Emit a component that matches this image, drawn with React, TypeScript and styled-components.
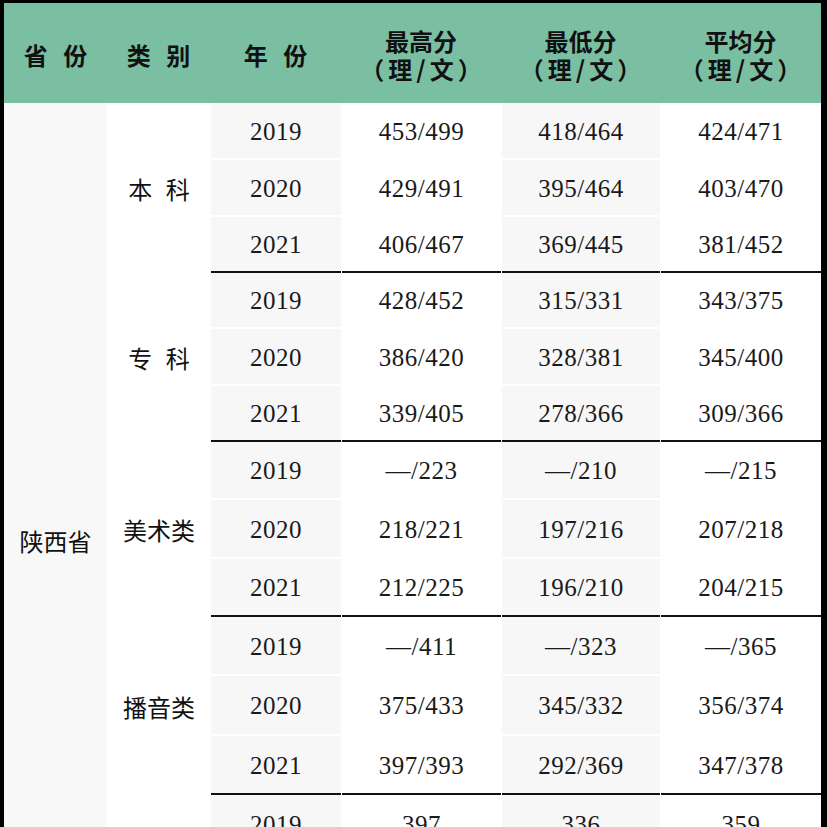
import React from 'react';
import styled, { createGlobalStyle } from 'styled-components';

const GlobalStyle = createGlobalStyle`
  html, body {
    margin: 0;
    padding: 0;
    background: #fff;
  }
`;

const Frame = styled.div`
  width: 827px;
  box-sizing: border-box;
  border-left: 4px solid #000;
  border-top: 3px solid #000;
  border-right: 6px solid #000;
  background: #fff;
`;

const HeaderRow = styled.div`
  display: grid;
  grid-template-columns: 103px 103px 131px 160px 159px 161px;
  height: 100px;
  background: #7bbfa3;
  font-family: "Noto Sans CJK SC", sans-serif;
  font-weight: 700;
  font-size: 24px;
  color: #111;
`;

const HeadCell = styled.div`
  display: flex;
  flex-direction: column;
  align-items: center;
  justify-content: center;
  padding-top: 4px;
  line-height: 28px;
  text-align: center;
  word-spacing: 10px;
  white-space: pre;
`;

const HeadSub = styled.span`
  letter-spacing: 4px;
  margin-right: -4px;
`;

const Body = styled.div`
  display: grid;
  grid-template-columns: 103px 102px 130px 159px 158px 160px;
  column-gap: 1px;
  background: #fff;
`;

const Province = styled.div<{ $span: number }>`
  grid-column: 1;
  grid-row: 1 / span ${(p) => p.$span};
  background: #f8f8f8;
  display: flex;
  align-items: center;
  justify-content: center;
  font-family: "Noto Sans CJK SC", sans-serif;
  font-size: 24px;
  color: #111;
`;

const Category = styled.div<{ $start: number }>`
  grid-column: 2;
  grid-row: ${(p) => p.$start} / span 3;
  display: flex;
  align-items: center;
  justify-content: center;
  font-family: "Noto Sans CJK SC", sans-serif;
  font-size: 24px;
  color: #111;
  word-spacing: 8px;
  white-space: pre;
`;

const Cell = styled.div<{ $gray: boolean; $last: boolean; $h: number }>`
  box-sizing: border-box;
  height: ${(p) => p.$h}px;
  display: flex;
  align-items: center;
  justify-content: center;
  padding-top: 2px;
  background: ${(p) => (p.$gray ? '#f7f7f7' : '#fff')};
  border-bottom: 2px solid ${(p) => (p.$last ? '#111' : '#fff')};
  font-family: "Liberation Serif", "Noto Sans CJK SC", serif;
  font-size: 25px;
  letter-spacing: 0.5px;
  color: #1a1a1a;
`;

type Group = { cat: string; heights: number[]; rows: string[][] };

const groups: Group[] = [
  {
    cat: '本 科',
    heights: [57, 57, 56],
    rows: [
      ['2019', '453/499', '418/464', '424/471'],
      ['2020', '429/491', '395/464', '403/470'],
      ['2021', '406/467', '369/445', '381/452'],
    ],
  },
  {
    cat: '专 科',
    heights: [56, 57, 56],
    rows: [
      ['2019', '428/452', '315/331', '343/375'],
      ['2020', '386/420', '328/381', '345/400'],
      ['2021', '339/405', '278/366', '309/366'],
    ],
  },
  {
    cat: '美术类',
    heights: [58, 59, 58],
    rows: [
      ['2019', '—/223', '—/210', '—/215'],
      ['2020', '218/221', '197/216', '207/218'],
      ['2021', '212/225', '196/210', '204/215'],
    ],
  },
  {
    cat: '播音类',
    heights: [59, 60, 59],
    rows: [
      ['2019', '—/411', '—/323', '—/365'],
      ['2020', '375/433', '345/332', '356/374'],
      ['2021', '397/393', '292/369', '347/378'],
    ],
  },
  {
    cat: '编导类',
    heights: [60, 61, 61],
    rows: [
      ['2019', '397', '336', '359'],
      ['2020', '402', '351', '368'],
      ['2021', '410', '362', '377'],
    ],
  },
];

const headers: { title: string; sub?: string }[] = [
  { title: '省 份' },
  { title: '类 别' },
  { title: '年 份' },
  { title: '最高分', sub: '（理/文）' },
  { title: '最低分', sub: '（理/文）' },
  { title: '平均分', sub: '（理/文）' },
];

const App: React.FC = () => {
  const totalRows = groups.length * 3;
  return (
    <>
      <GlobalStyle />
      <Frame>
        <HeaderRow>
          {headers.map((h) => (
            <HeadCell key={h.title}>
              <span>{h.title}</span>
              {h.sub && <HeadSub>{h.sub}</HeadSub>}
            </HeadCell>
          ))}
        </HeaderRow>
        <Body>
          <Province $span={totalRows}>陕西省</Province>
          {groups.map((g, gi) => (
            <React.Fragment key={g.cat}>
              <Category $start={gi * 3 + 1}>{g.cat}</Category>
              {g.rows.map((row, ri) =>
                row.map((v, ci) => (
                  <Cell
                    key={`${ri}-${ci}`}
                    $gray={ci === 0 || ci === 2}
                    $last={ri === 2}
                    $h={g.heights[ri]}
                    style={{ gridColumn: ci + 3, gridRow: gi * 3 + ri + 1 }}
                  >
                    {v}
                  </Cell>
                ))
              )}
            </React.Fragment>
          ))}
        </Body>
      </Frame>
    </>
  );
};

export default App;
